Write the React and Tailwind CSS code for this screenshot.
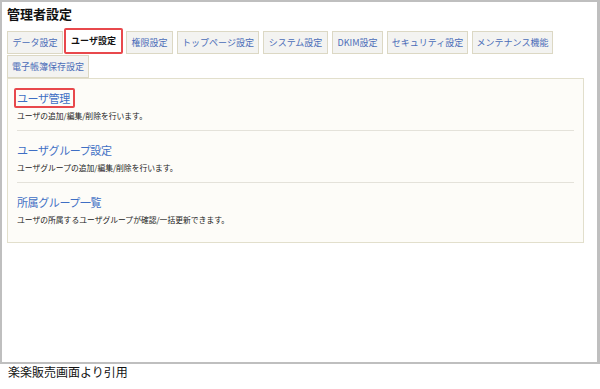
import React from 'react';

const tabs = [
  { label: 'データ設定', w: 'w-[56px]' },
  { label: 'ユーザ設定', w: 'w-[59px]', active: true },
  { label: '権限設定', w: 'w-[47px]' },
  { label: 'トップページ設定', w: 'w-[82px]' },
  { label: 'システム設定', w: 'w-[65px]' },
  { label: 'DKIM設定', w: 'w-[51px]' },
  { label: 'セキュリティ設定', w: 'w-[81px]' },
  { label: 'メンテナンス機能', w: 'w-[81px]' },
  { label: '電子帳簿保存設定', w: 'w-[82px]' },
];

const items = [
  { title: 'ユーザ管理', desc: 'ユーザの追加/編集/削除を行います。', marked: true },
  { title: 'ユーザグループ設定', desc: 'ユーザグループの追加/編集/削除を行います。' },
  { title: '所属グループ一覧', desc: 'ユーザの所属するユーザグループが確認/一括更新できます。' },
];

const Tab = ({ label, active, w }) => {
  if (active) {
    return (
      <div className={`${w} h-[26px] -mt-[3px] -ml-[3px] -mr-[1px] flex items-center justify-center bg-white border-2 border-[#e8484c] rounded-[2px] text-[9px] font-bold text-[#111]`}>
        {label}
      </div>
    );
  }
  return (
    <div className={`${w} h-[23px] flex items-center justify-center bg-[#f3f3f1] border border-[#dcd8c4] text-[9px] text-[#4a6cb8]`}>
      {label}
    </div>
  );
};

export default function App() {
  return (
    <div className="w-[600px] h-[389px] bg-white" style={{ fontFamily: '"Noto Sans CJK JP", "Noto Sans", sans-serif' }}>
      <div className="w-[600px] h-[364px] border-2 border-r-[3px] border-[#bfbfbf] pl-[5px] pr-[14px] pt-[4px]">
        <h1 className="text-[13px] leading-[16px] font-bold text-[#111]">管理者設定</h1>

        <div className="mt-[9px] flex flex-wrap items-start gap-x-[4px] gap-y-[1px]">
          {tabs.map((t) => (
            <Tab key={t.label} {...t} />
          ))}
        </div>

        <div className="w-[577px] h-[165px] bg-[#fdfcf8] border border-[#e2dfcc] px-[9px]">
          {items.map((it, i) => (
            <div
              key={it.title}
              className={`pt-[11px] pb-[9px] ${i < items.length - 1 ? 'border-b border-[#e4e2da]' : ''}`}
            >
              <div className="h-[16px] flex items-start">
                {it.marked ? (
                  <span className="-ml-[3px] -mt-[2px] pl-[1px] pr-[3px] border-2 border-[#e8484c] rounded-[2px] text-[11px] leading-[16px] text-[#3f6fc4] tracking-[-0.4px]">
                    {it.title}
                  </span>
                ) : (
                  <span className="text-[11px] leading-[16px] text-[#3f6fc4] tracking-[-0.4px]">{it.title}</span>
                )}
              </div>
              <p className="mt-[5px] text-[7.8px] leading-[10px] text-[#222]">{it.desc}</p>
            </div>
          ))}
        </div>
      </div>
      <p className="pl-[8px] text-[12px] leading-[16px] text-[#111]">楽楽販売画面より引用</p>
    </div>
  );
}
